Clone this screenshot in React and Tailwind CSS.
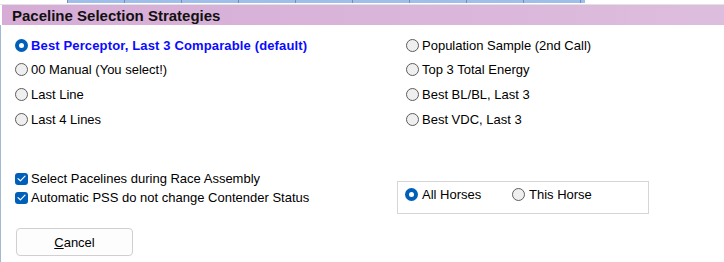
import React from 'react';

const Radio = ({ checked }) =>
    checked ? (
        <span className="flex items-center justify-center w-[13px] h-[13px] rounded-full bg-[#005fb8] shrink-0">
            <span className="w-[5px] h-[5px] rounded-full bg-white" />
        </span>
    ) : (
        <span className="w-[13px] h-[13px] rounded-full border border-[#5c5c5c] bg-[#efefef] shrink-0" />
    );

const Check = () => (
    <span className="flex items-center justify-center w-[13px] h-[12px] rounded-[3px] bg-[#005fb8] shrink-0">
        <svg width="9" height="7" viewBox="0 0 9 7" fill="none">
            <path d="M1 3.6 L3.4 5.8 L8 1.2" stroke="white" strokeWidth="1.2" strokeLinecap="round" strokeLinejoin="round" />
        </svg>
    </span>
);

const Option = ({ label, checked, bold, first }) => (
    <div className={first ? 'flex items-center h-[24px] gap-[3px]' : 'flex items-center h-[25px] gap-[3px]'}>
        <Radio checked={checked} />
        <span className={bold ? 'font-bold text-[#0a0aff] leading-none tracking-[0.14px]' : 'text-black leading-none'}>{label}</span>
    </div>
);

const leftOpts = [
    { label: 'Best Perceptor, Last 3 Comparable (default)', checked: true, bold: true, first: true },
    { label: '00 Manual (You select!)' },
    { label: 'Last Line' },
    { label: 'Last 4 Lines' },
];

const rightOpts = [
    { label: 'Population Sample (2nd Call)', first: true },
    { label: 'Top 3 Total Energy' },
    { label: 'Best BL/BL, Last 3' },
    { label: 'Best VDC, Last 3' },
];

const cells = [0, 1, 2, 3, 4, 5, 6, 7, 8];

const App = () => {
    return (
        <div className="w-[724px] h-[262px] bg-white overflow-hidden text-[13px] text-black" style={{ fontFamily: '"Liberation Sans", Arial, sans-serif' }}>
            {/* grid strip behind the dialog */}
            <div className="flex h-[3px]">
                <div className="w-[67px] bg-white" />
                {cells.map((i) => (
                    <div key={i} className="w-[57px] bg-[#9fbfea] border-l border-[#6e8ebd]" />
                ))}
                <div className="w-[5px] bg-[#9fbfea] border-l border-[#6e8ebd]" />
            </div>
            <div className="h-px bg-white" />
            <div className="h-px bg-[#e2e2e2]" />

            {/* header */}
            <div className="h-[20px] ml-[2px] flex items-center pl-[10px] bg-gradient-to-r from-[#d6acd6] to-[#ddbddd]">
                <span className="font-bold text-[15px] leading-none text-[#111]">Paceline Selection Strategies</span>
            </div>

            {/* body */}
            <div className="border-l border-[#a3b8d2] h-[237px] pl-[14px] pt-[8px]">
                <div className="grid grid-cols-[391px_1fr]">
                    <div className="flex flex-col">
                        {leftOpts.map((o) => (
                            <Option key={o.label} {...o} />
                        ))}
                    </div>
                    <div className="flex flex-col">
                        {rightOpts.map((o) => (
                            <Option key={o.label} {...o} />
                        ))}
                    </div>
                </div>

                <div className="flex mt-[37px]">
                    <div className="w-[382px] flex flex-col">
                        <div className="flex items-center h-[19px] gap-[3px]">
                            <Check />
                            <span className="leading-none">Select Pacelines during Race Assembly</span>
                        </div>
                        <div className="flex items-center h-[19px] gap-[3px]">
                            <Check />
                            <span className="leading-none">Automatic PSS do not change Contender Status</span>
                        </div>
                    </div>
                    <div className="mt-[12px] w-[252px] h-[33px] border border-[#d6d6d6] flex items-start pt-[6px] pl-[7px]">
                        <div className="flex items-center gap-[4px] w-[107px]">
                            <Radio checked />
                            <span className="leading-none">All Horses</span>
                        </div>
                        <div className="flex items-center gap-[4px]">
                            <Radio />
                            <span className="leading-none">This Horse</span>
                        </div>
                    </div>
                </div>

                <button className="mt-[14px] ml-px w-[117px] h-[28px] rounded-[4px] border border-[#d0d0d0] bg-[#fdfdfd] flex items-center justify-center text-[13px] leading-none text-black">
                    <span><span className="underline">C</span>ancel</span>
                </button>
            </div>
        </div>
    );
};

export default App;
